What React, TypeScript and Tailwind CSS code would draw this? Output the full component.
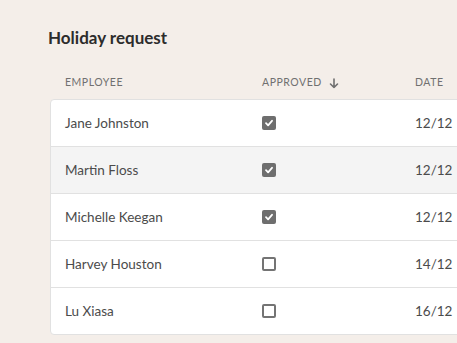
const rows = [
  { name: 'Jane Johnston', approved: true, date: '12/12' },
  { name: 'Martin Floss', approved: true, date: '12/12', hover: true },
  { name: 'Michelle Keegan', approved: true, date: '12/12' },
  { name: 'Harvey Houston', approved: false, date: '14/12' },
  { name: 'Lu Xiasa', approved: false, date: '16/12' },
];

function Check({ on }: { on: boolean }) {
  if (!on) {
    return <span className="block w-[14px] h-[14px] rounded-[2px] border-2 border-[#747474] bg-white" />;
  }
  return (
    <span className="flex items-center justify-center w-[14px] h-[14px] rounded-[2px] bg-[#6e6e6e]">
      <svg width="10" height="10" viewBox="0 0 10 10" fill="none">
        <path d="M2 5.2 L4.1 7.3 L8 2.8" stroke="white" strokeWidth="1.8" strokeLinecap="round" strokeLinejoin="round" />
      </svg>
    </span>
  );
}

export default function App() {
  return (
    <div className="min-h-screen w-full overflow-hidden bg-[#f4eee9] font-['Lato',sans-serif]">
      <div className="pl-12 pt-[27px]">
        <h1 className="text-[17px] leading-[22px] font-bold text-[#2c2c2c]">Holiday request</h1>

        <div className="ml-[2px] mt-[18px] w-[460px]">
          <div className="flex items-center h-[32px] px-[15px] text-[10.5px] tracking-[0.05em] text-[#707070] uppercase">
            <div className="w-[197px]">Employee</div>
            <div className="w-[153px] flex items-center gap-[7px]">
              Approved
              <svg width="10" height="11" viewBox="0 0 10 11" fill="none">
                <path d="M5 1 V9.5 M1.5 6 L5 9.5 L8.5 6" stroke="#707070" strokeWidth="1.6" strokeLinecap="round" strokeLinejoin="round" />
              </svg>
            </div>
            <div>Date</div>
          </div>

          <div className="bg-white border border-[#e1e1e1] rounded-[4px] overflow-hidden">
            {rows.map((r, i) => (
              <div
                key={r.name}
                className={`flex items-center px-[14px] text-[13.5px] text-[#4b4b4b] ${
                  i > 0 ? 'h-[47px] border-t border-[#e1e1e1]' : 'h-[46px]'
                } ${r.hover ? 'bg-[#f4f4f4]' : ''}`}
              >
                <div className="w-[197px]">{r.name}</div>
                <div className="w-[153px]">
                  <Check on={r.approved} />
                </div>
                <div>{r.date}</div>
              </div>
            ))}
          </div>
        </div>
      </div>
    </div>
  );
}
